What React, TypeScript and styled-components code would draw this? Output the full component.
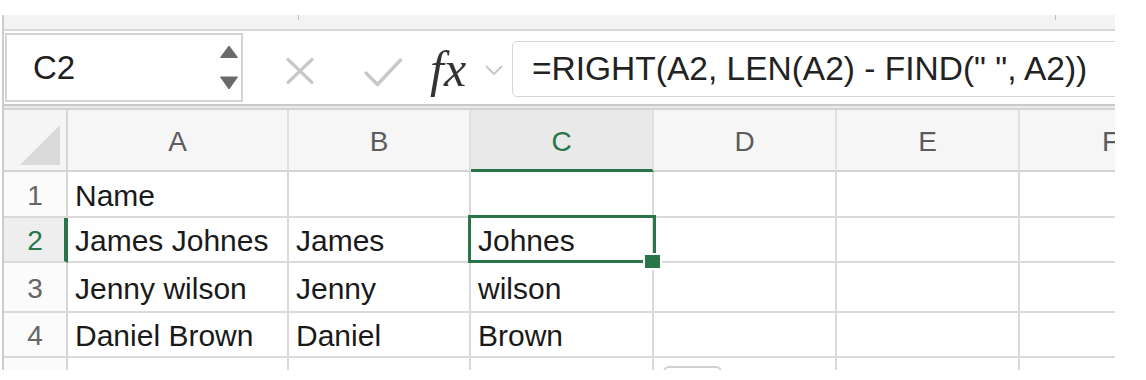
import React from "react";
import styled, { createGlobalStyle, css } from "styled-components";

const GREEN = "#277548";
const GRID = "#dadada";

const GlobalStyle = createGlobalStyle`
  html, body { margin: 0; padding: 0; background: #ffffff; }
  body { font-family: "Liberation Sans", Arial, sans-serif; }
  *, *::before, *::after { box-sizing: border-box; }
`;

const Page = styled.div`
  width: 1146px;
  height: 380px;
  padding-top: 15px;
  background: #ffffff;
  overflow: hidden;
`;

const Window = styled.div`
  position: relative;
  width: 1113px;
  height: 355px;
  margin-left: 2px;
  border-left: 2px solid #cdcdcd;
  overflow: hidden;
  display: flex;
  flex-direction: column;
`;

const TopBand = styled.div`
  height: 16px;
  flex-shrink: 0;
  background: #f3f3f3;
  border-bottom: 2px solid #d8d8d8;
  display: flex;
  align-items: flex-start;
`;

const Tick = styled.div<{ $offset: number }>`
  width: 1px;
  height: 5px;
  background: #bdbdbd;
  margin-left: ${(p) => p.$offset}px;
`;

const FormulaRow = styled.div`
  height: 73px;
  flex-shrink: 0;
  display: flex;
  align-items: center;
  background: #ffffff;
`;

const NameBox = styled.div`
  width: 238px;
  height: 69px;
  margin-left: 1px;
  border: 2px solid #d4d4d4;
  display: flex;
  align-items: center;
  padding-left: 26px;
  padding-right: 3px;
`;

const NameText = styled.span`
  flex: 1;
  font-size: 33px;
  color: #202020;
`;

const IconSlot = styled.div<{ $left: number; $top: number }>`
  display: flex;
  flex-shrink: 0;
  margin-left: ${(p) => p.$left}px;
  margin-top: ${(p) => p.$top}px;
`;

const Fx = styled.span`
  flex-shrink: 0;
  width: 40px;
  margin-left: 27px;
  margin-top: 2px;
  font-family: "Liberation Serif", "Times New Roman", serif;
  font-style: italic;
  font-size: 50px;
  line-height: 1;
  letter-spacing: 0px;
  color: #333333;
  white-space: nowrap;
`;

const FormulaInput = styled.div`
  flex: 1;
  height: 56px;
  margin-left: 9px;
  margin-top: 3px;
  margin-right: -30px;
  border: 1px solid #d6d6d6;
  border-radius: 5px;
  padding-left: 19px;
  display: flex;
  align-items: center;
  font-size: 33.5px;
  color: #222222;
  white-space: nowrap;
`;

const Separator = styled.div`
  height: 6px;
  flex-shrink: 0;
  border-top: 2px solid #c9c9c9;
  border-bottom: 2px solid #d3d3d3;
  background: #ebebeb;
`;

const Grid = styled.div`
  display: grid;
  flex-shrink: 0;
  width: max-content;
  grid-template-columns: 64px 221px 182px 183px 183px 183px 183px;
  grid-template-rows: 62px 46px 45px 50px 45px 30px;
`;

const Corner = styled.div`
  background: #f5f5f5;
  border-right: 2px solid #d6d6d6;
  border-bottom: 2px solid #d4d4d4;
  display: flex;
  align-items: flex-end;
  justify-content: flex-end;
  padding: 0 6px 5px 0;
`;

const CornerTriangle = styled.div`
  width: 40px;
  height: 40px;
  background: #dadada;
  clip-path: polygon(100% 0, 100% 100%, 0 100%);
`;

const ColHeader = styled.div<{ $selected?: boolean }>`
  background: ${(p) => (p.$selected ? "#e9e9e9" : "#f6f6f6")};
  border-right: 2px solid #e0e0e0;
  border-bottom: ${(p) => (p.$selected ? `3px solid ${GREEN}` : "2px solid #d4d4d4")};
  display: flex;
  align-items: center;
  justify-content: center;
  padding-top: 4px;
  font-size: 28px;
  color: ${(p) => (p.$selected ? GREEN : "#5c5c5c")};
`;

const RowHeader = styled.div<{ $selected?: boolean }>`
  background: ${(p) => (p.$selected ? "#eeeeee" : "#fbfbfb")};
  border-right: ${(p) => (p.$selected ? `4px solid ${GREEN}` : "2px solid #d6d6d6")};
  border-bottom: 2px solid ${GRID};
  display: flex;
  align-items: center;
  justify-content: center;
  padding-top: 3px;
  ${(p) =>
    p.$selected &&
    css`
      padding-left: 2px;
    `}
  font-size: 28px;
  color: ${(p) => (p.$selected ? GREEN : "#666666")};
`;

const Cell = styled.div`
  position: relative;
  border-right: 2px solid ${GRID};
  border-bottom: 2px solid ${GRID};
  display: flex;
  align-items: center;
  padding-left: 7px;
  padding-top: 3px;
  font-size: 30px;
  color: #1a1a1a;
  white-space: nowrap;
  background: #ffffff;
`;

const Selection = styled.div`
  position: absolute;
  top: -3px;
  left: -3px;
  right: -4px;
  bottom: -2px;
  border: 3px solid ${GREEN};
  pointer-events: none;
  z-index: 2;
`;

const FillHandle = styled.div`
  position: absolute;
  right: -10px;
  bottom: -9px;
  width: 19px;
  height: 17px;
  background: ${GREEN};
  border: 2px solid #ffffff;
  z-index: 3;
`;

const SheetTab = styled.div`
  position: absolute;
  left: 659px;
  top: 351px;
  width: 59px;
  height: 24px;
  border: 2px solid #d2d2d2;
  border-radius: 6px;
  background: #ffffff;
  z-index: 4;
`;

const COLUMNS = ["A", "B", "C", "D", "E", "F"];
const ROWS: string[][] = [
  ["Name", "", ""],
  ["James Johnes", "James", "Johnes"],
  ["Jenny wilson", "Jenny", "wilson"],
  ["Daniel Brown", "Daniel", "Brown"],
  ["", "", ""],
];
const SELECTED_ROW = 1;
const SELECTED_COL = 2;

const Spinner = () => (
  <svg width="18" height="46" viewBox="0 0 18 46">
    <path d="M9 1 L17.5 12.5 L0.5 12.5 Z" fill="#6a6a6a" stroke="#6a6a6a" strokeWidth="1" strokeLinejoin="round" />
    <path d="M0.5 32 L17.5 32 L9 44 Z" fill="#6a6a6a" stroke="#6a6a6a" strokeWidth="1" strokeLinejoin="round" />
  </svg>
);

const CancelIcon = () => (
  <svg width="30" height="28" viewBox="0 0 30 28">
    <path d="M3 2.5 L27 25.5 M27 2.5 L3 25.5" stroke="#c8c8c8" strokeWidth="3.2" strokeLinecap="round" fill="none" />
  </svg>
);

const EnterIcon = () => (
  <svg width="40" height="32" viewBox="0 0 40 32">
    <path d="M3 17 L14.5 28.5 L37.5 4" stroke="#c8c8c8" strokeWidth="3.4" strokeLinecap="round" strokeLinejoin="round" fill="none" />
  </svg>
);

const Chevron = () => (
  <svg width="18" height="11" viewBox="0 0 18 11">
    <path d="M1.5 1.5 L9 9 L16.5 1.5" stroke="#c6c6c6" strokeWidth="1.8" strokeLinecap="round" strokeLinejoin="round" fill="none" />
  </svg>
);

export default function App() {
  return (
    <>
      <GlobalStyle />
      <Page>
        <Window>
          <TopBand>
            <Tick $offset={294} />
            <Tick $offset={756} />
          </TopBand>
          <FormulaRow>
            <NameBox>
              <NameText>C2</NameText>
              <Spinner />
            </NameBox>
            <IconSlot $left={42} $top={7}>
              <CancelIcon />
            </IconSlot>
            <IconSlot $left={48} $top={9}>
              <EnterIcon />
            </IconSlot>
            <Fx>fx</Fx>
            <IconSlot $left={15} $top={5}>
              <Chevron />
            </IconSlot>
            <FormulaInput>=RIGHT(A2, LEN(A2) - FIND(" ", A2))</FormulaInput>
          </FormulaRow>
          <Separator />
          <Grid>
            <Corner>
              <CornerTriangle />
            </Corner>
            {COLUMNS.map((c, i) => (
              <ColHeader key={c} $selected={i === SELECTED_COL}>
                {c}
              </ColHeader>
            ))}
            {ROWS.map((row, r) => (
              <React.Fragment key={r}>
                <RowHeader $selected={r === SELECTED_ROW}>{r < 4 ? r + 1 : ""}</RowHeader>
                {COLUMNS.map((c, ci) => (
                  <Cell key={c}>
                    {row[ci] ?? ""}
                    {r === SELECTED_ROW && ci === SELECTED_COL && (
                      <>
                        <Selection />
                        <FillHandle />
                      </>
                    )}
                  </Cell>
                ))}
              </React.Fragment>
            ))}
          </Grid>
          <SheetTab />
        </Window>
      </Page>
    </>
  );
}
